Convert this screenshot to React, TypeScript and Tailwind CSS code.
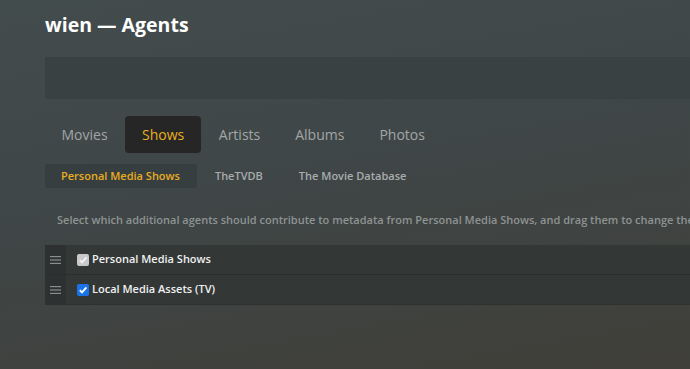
import React from "react";

const tabs = ["Movies", "Shows", "Artists", "Albums", "Photos"];
const subTabs = ["Personal Media Shows", "TheTVDB", "The Movie Database"];

function Handle() {
  return (
    <svg width="11" height="8" viewBox="0 0 11 8">
      <rect x="0" y="0" width="11" height="1.2" fill="#8a8d8d" />
      <rect x="0" y="3.4" width="11" height="1.2" fill="#8a8d8d" />
      <rect x="0" y="6.8" width="11" height="1.2" fill="#8a8d8d" />
    </svg>
  );
}

function Check({ disabled }: { disabled?: boolean }) {
  return (
    <span
      className={
        "inline-flex h-[12px] w-[12px] items-center justify-center rounded-[2px] " +
        (disabled ? "bg-[#c9c9c9]" : "bg-[#1a73e8]")
      }
    >
      <svg width="10" height="10" viewBox="0 0 10 10">
        <path
          d="M1.8 5.2 L4 7.4 L8.4 2.4"
          fill="none"
          stroke={disabled ? "#f2f2f2" : "#ffffff"}
          strokeWidth="1.8"
        />
      </svg>
    </span>
  );
}

export default function App() {
  return (
    <div
      className="h-[369px] w-[690px] overflow-hidden bg-[linear-gradient(170deg,#434c4d_0%,#3f4647_45%,#403f39_100%)] pl-[45px]"
      style={{ fontFamily: '"Open Sans", "Noto Sans", sans-serif' }}
    >
      <h1 className="pt-[11px] text-[19.5px] font-bold leading-[28px] text-white">wien — Agents</h1>
      <div className="mt-[18px] h-[42px] bg-[#394142]" />
      <div className="ml-[-1px] mt-[17px] flex h-[37px] items-stretch">
        {tabs.map((t) => (
          <div
            key={t}
            className={
              "flex items-center rounded-[4px] text-[14px] " +
              (t === "Shows" ? "bg-[#262626] px-[17px] text-[#ebae1e]" : "px-[17.5px] text-[#a2a6a6]")
            }
          >
            {t}
          </div>
        ))}
      </div>
      <div className="mt-[11px] flex h-[24px] items-stretch">
        {subTabs.map((t, i) => (
          <div
            key={t}
            className={
              "flex items-center rounded-[3px] text-[11px] font-semibold " +
              (i === 0 ? "bg-[#373e3f] pl-[16px] pr-[17px] text-[#e9ad1f]" : "px-[18px] text-[#a9acac]")
            }
          >
            {t}
          </div>
        ))}
      </div>
      <p className="mt-[24px] whitespace-nowrap pl-[12px] text-[11px] font-semibold leading-[15px] text-[#8e9393]">
        Select which additional agents should contribute to metadata from Personal Media Shows, and drag them to change the
      </p>
      <div className="mt-[18px] flex flex-col">
        {[
          { label: "Personal Media Shows", disabled: true },
          { label: "Local Media Assets (TV)", disabled: false },
        ].map((r, i) => (
          <div
            key={r.label}
            className={
              "flex h-[30px] items-stretch bg-[#333837] border-b " + (i === 0 ? "border-[#2a2e2e]" : "border-[#2d3130]")
            }
          >
            <div className="flex w-[21px] items-center justify-center bg-[#2d3131]">
              <Handle />
            </div>
            <div className="flex items-center gap-[3px] pl-[11px]">
              <Check disabled={r.disabled} />
              <span className="text-[11px] font-semibold text-[#f0f0f0]">{r.label}</span>
            </div>
          </div>
        ))}
      </div>
    </div>
  );
}
